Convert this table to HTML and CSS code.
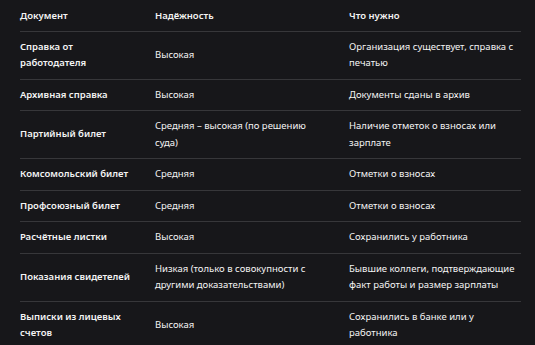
FILE: index.html
```html
<!DOCTYPE html>
<html lang="ru">
<head>
<meta charset="utf-8">
<link rel="stylesheet" href="styles.css">
</head>
<body>
<div class="wrap">
<table class="tbl">
  <colgroup>
    <col class="c1"><col class="c2"><col class="c3">
  </colgroup>
  <thead>
    <tr><th>Документ</th><th>Надёжность</th><th>Что нужно</th></tr>
  </thead>
  <tbody>
    <tr><td class="doc">Справка от работодателя</td><td>Высокая</td><td>Организация существует, справка с печатью</td></tr>
    <tr><td class="doc">Архивная справка</td><td>Высокая</td><td>Документы сданы в архив</td></tr>
    <tr><td class="doc">Партийный билет</td><td>Средняя – высокая (по решению суда)</td><td>Наличие отметок о взносах или зарплате</td></tr>
    <tr><td class="doc">Комсомольский билет</td><td>Средняя</td><td>Отметки о взносах</td></tr>
    <tr><td class="doc">Профсоюзный билет</td><td>Средняя</td><td>Отметки о взносах</td></tr>
    <tr><td class="doc">Расчётные листки</td><td>Высокая</td><td>Сохранились у работника</td></tr>
    <tr><td class="doc">Показания свидетелей</td><td>Низкая (только в совокупности с другими доказательствами)</td><td>Бывшие коллеги, подтверждающие факт работы и размер зарплаты</td></tr>
    <tr><td class="doc">Выписки из лицевых счетов</td><td>Высокая</td><td>Сохранились в банке или у работника</td></tr>
  </tbody>
</table>
</div>
</body>
</html>
```
FILE: styles.css
```css
html, body {
  margin: 0;
  padding: 0;
  background: #17171a;
}
body {
  font-family: "Noto Sans", "Open Sans", sans-serif;
  font-size: 9.5px;
  color: #f4f4f4;
}
.wrap {
  padding: 0 14px 0 20px;
}
.tbl {
  width: 501px;
  border-collapse: collapse;
  table-layout: fixed;
}
.c1 { width: 135px; }
.c2 { width: 194px; }
.c3 { width: 172px; }
th, td {
  text-align: left;
  vertical-align: middle;
  padding: 7px 20px 7px 0;
  line-height: 16.5px;
  border-bottom: 1px solid #37373a;
}
th:nth-child(2), td:nth-child(2) {
  padding-right: 38px;
}
th:last-child, td:last-child {
  padding-right: 4px;
}
th {
  font-weight: 600;
  padding-top: 8px;
  padding-bottom: 6px;
}
td.doc {
  font-weight: 600;
}
```
